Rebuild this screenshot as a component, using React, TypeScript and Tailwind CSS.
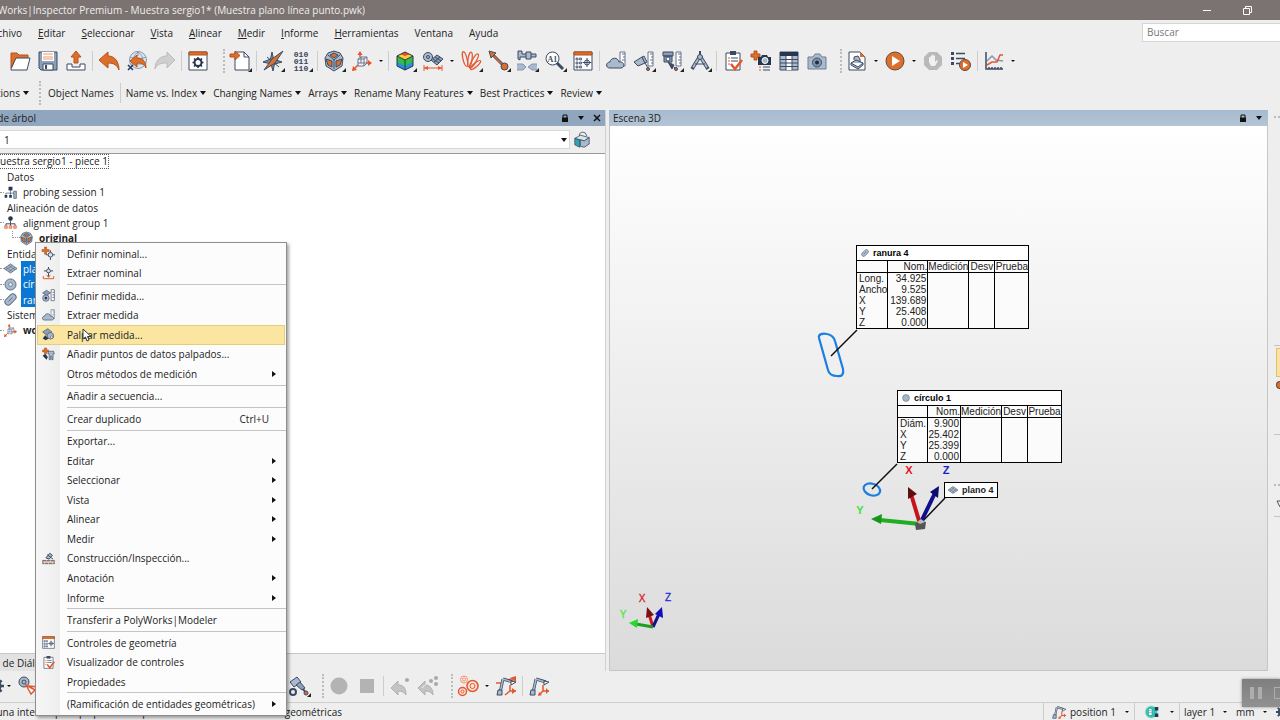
import React, { ReactNode } from "react";

const INK = "#3c4b63";
const STEEL = "#a9bacd";
const ORANGE = "#dd6f2a";
const RED = "#e4572e";

const icons: Record<string, ReactNode> = {
  open: (
    <>
      <path d="M1 17V2h6l2 2h9v4H6z" fill={ORANGE} stroke="#b4531c" />
      <path d="M1 18 6 7h14l-3 12H1z" fill="#fff" stroke={INK} />
    </>
  ),
  save: (
    <>
      <path d="M1 1h18v18H3l-2-2z" fill="#8ba0b8" stroke={INK} />
      <path d="M4 1h12v9H4z" fill="#fff" />
      <path d="M5 3h10M5 6h10M5 8h10" stroke="#e79a72" />
      <path d="M5 13h10v6H5z" fill="#fff" stroke={INK} />
      <path d="M7 14h2v4H7z" fill={INK} />
    </>
  ),
  upload: (
    <>
      <path d="M1 13h5v3h8v-3h5v6H1z" fill="#fff" stroke={INK} />
      <path d="M8 12V6H5l5-6 5 6h-3v6z" fill={ORANGE} stroke="#b4531c" />
    </>
  ),
  undo: <path d="M0 9 9 1v4c7 0 11 6 11 14-2-5-5-7-11-7v5z" fill={ORANGE} stroke="#b4531c" />,
  undoView: (
    <>
      <circle cx="11" cy="9" r="8.500" fill="#dfe6ee" stroke="#8597ae" />
      <path d="M11 1v4M3 6c5 2 11 2 16 0M11 1c-4 3-5 6-5 9M11 1c4 3 5 6 5 9M3 13h16" stroke="#8597ae" />
      <path d="M3 10 10 4v3c6 0 9 4 9 10-2-4-4-5-9-5v4z" fill={ORANGE} stroke="#b4531c" />
      <path d="m1 14 5 5m0-5-5 5" stroke="#203a63" strokeWidth="1.500" />
    </>
  ),
  redo: <path d="M20 9 12 1v4C4 5 0 11 0 18c2-5 6-6 12-6v5z" fill="#cfcfcf" stroke="#bcbcbc" />,
  settings: (
    <>
      <path d="M1 1h18v18H1z" fill="#fff" stroke={INK} />
      <path d="M1 1h18v3H1z" fill={ORANGE} stroke="#b4531c" />
      <circle cx="10" cy="11.500" r="3.500" stroke="#24344d" strokeWidth="2" />
      <path d="M10 6v2m0 7v2m-5.500-5.500h2m7 0h2M6 7.500l1.500 1.500m5 5 1.500 1.500m0-8L12.500 9m-5 5L6 15.500" stroke="#24344d" strokeWidth="1.500" />
    </>
  ),
  importDoc: (
    <>
      <path d="M5 1h9l5 5v13H5z" fill="#fff" stroke={INK} />
      <path d="M14 1v5h5" stroke={INK} />
      <path d="M0 3h5V0l5 4.500L5 9V6H0z" fill={ORANGE} stroke="#b4531c" />
    </>
  ),
  compass: (
    <>
      <path d="m9 1 1.500 7L19 11l-7.500 2L10 20l-2-7-8-2 7.500-3z" fill="#7689a2" stroke={INK} />
      <path d="m4 6 12 10" stroke={INK} />
      <path d="M20 0 12 12 1 19 9 8z" fill={ORANGE} stroke={INK} />
    </>
  ),
  atom: (
    <>
      <path d="M4 2 10 0l6 2 3 5-1 8-8 5-8-5L1 7z" fill={STEEL} stroke={INK} />
      <path d="m6 4 4-2 4 2-4 3z" fill={ORANGE} stroke={INK} />
      <path d="m2 8 6 2v6l-4-2zM18 8l-6 2v6l4-2z" fill={ORANGE} stroke={INK} />
      <path d="M10 9v9M4 4l6 5 6-5" stroke={INK} />
    </>
  ),
  axes: (
    <>
      <path d="m6 8 3-2h6v6l-3 3H6zM6 8h6v7M12 8l3-2M9 6v6H6m3 0h6" fill="#f4f6f9" stroke="#66758c" />
      <path d="M8 6V1m6 11h5M6 14l-5 5" stroke={RED} strokeWidth="1.500" />
      <path d="M8 0 5.500 4h5zM20 12l-4-3v6zM0 20l1-5 4 4z" fill={RED} />
    </>
  ),
  spectrum: (
    <>
      <path d="M10 1 2 5l8 4 8-4z" fill="#ef4b2b" />
      <path d="M2 5v10l8 4V9zM18 5v10l-8 4V9z" fill="#2fbd4b" />
      <path d="M5 3 10 5l5-2 3 2-8 4-8-4z" fill="#f7d22c" />
      <path d="M2 11v4l8 4 8-4v-4l-8 4z" fill="#2d8be0" />
      <path d="M10 1 2 5v10l8 4 8-4V5zM2 5l8 4 8-4M10 9v10" stroke="#26364f" />
    </>
  ),
  features: (
    <>
      <circle cx="5" cy="6" r="4.500" fill={STEEL} stroke={INK} />
      <circle cx="5" cy="6" r="1.500" stroke={INK} />
      <path d="m8 9 6-5 6 4-6 6z" fill="#8ba0b8" stroke={INK} />
      <path d="m10 8 6 4M12 6l6 4M11 11l6-5" stroke={INK} />
      <path d="M1 17h18M1 14v6M19 14v6" stroke={RED} />
      <path d="m1 17 4-2v4zM19 17l-4-2v4z" fill={RED} />
    </>
  ),
  fingers: (
    <g stroke={RED} strokeWidth="1.300">
      <ellipse cx="4" cy="8" rx="2" ry="7.500" transform="rotate(-14 4 8)" />
      <ellipse cx="9" cy="8.500" rx="2" ry="7.500" transform="rotate(8 9 8.500)" />
      <ellipse cx="13" cy="10" rx="2" ry="8" transform="rotate(30 13 10)" />
      <ellipse cx="14.500" cy="14" rx="1.800" ry="6.500" transform="rotate(50 14.500 14)" />
    </g>
  ),
  distance: (
    <>
      <path d="m4 4 11 11" stroke={INK} strokeWidth="3" />
      <path d="m4 4 11 11" stroke={ORANGE} strokeWidth="1.500" />
      <path d="m0 0 7 2-5 5z" fill={ORANGE} stroke={INK} />
      <circle cx="15.500" cy="15.500" r="3.500" fill={ORANGE} stroke={INK} />
    </>
  ),
  caliper: (
    <>
      <path d="M1 0v8l2 1V6h16V3H5V0z" fill={STEEL} stroke={INK} />
      <path d="M9 1h5v7H9z" fill={STEEL} stroke={INK} />
      <path d="M0 13h6l3 3-3 3H0M20 13h-5l-4 3 4 3h5" fill={STEEL} stroke="#8597ae" />
    </>
  ),
  callout: (
    <>
      <circle cx="7.500" cy="7.500" r="6.500" fill="#fff" stroke={INK} />
      <path d="m12 12 6 6" stroke={INK} strokeWidth="3" />
      <text x="2.500" y="10.500" fill={INK} stroke="none" fontSize="8" fontWeight="700" fontFamily="Liberation Serif, serif">
        A1
      </text>
    </>
  ),
  controls: (
    <>
      <path d="M1 1h18v18H1z" fill="#fff" stroke={INK} />
      <path d="M1 1h18v3H1z" fill={ORANGE} stroke="#b4531c" />
      <path d="M3 7h2v2H3zM6.500 7h2v2h-2zM3 11h2v2H3zM6.500 11h2v2h-2zM3 15h2v2H3zM6.500 15h2v2h-2z" fill={STEEL} stroke={INK} strokeWidth=".7" />
      <circle cx="14" cy="11.500" r="2.500" stroke={INK} />
      <path d="M14 7v9M9.500 11.500h9" stroke={INK} />
    </>
  ),
  cloud: (
    <>
      <path d="M14 1h5v14h-5z" fill="#fff" stroke="#66758c" />
      <path d="M16 3h3M17 6h2M16 9h3" stroke="#66758c" />
      <path d="M4 17c-5 0-4-6 0-6 1-5 8-5 9 0 6-1 6 6 2 6z" fill={STEEL} stroke={INK} />
    </>
  ),
  probe: (
    <>
      <path d="M14 1h5v14h-5z" fill="#fff" stroke="#66758c" />
      <path d="M16 3h3M17 6h2M16 9h3M17 12h2" stroke="#66758c" />
      <path d="m0 11 8-5 3 6-7 3z" fill={STEEL} stroke={INK} />
      <path d="m8 6 2-1 3 6-2 1zM11 12l3 5" fill={STEEL} stroke={INK} />
      <circle cx="14" cy="18" r="1.500" fill={ORANGE} stroke={INK} />
    </>
  ),
  scanner: (
    <>
      <path d="M14 1h5v14h-5z" fill="#fff" stroke="#66758c" />
      <path d="M16 3h3M17 6h2M16 9h3M17 12h2" stroke="#66758c" />
      <path d="M1 1h10v4H1zM2 5h8v6H2z" fill="#8ba0b8" stroke={INK} />
      <circle cx="6" cy="8" r="2" fill="#fff" stroke={INK} />
      <path d="m6 11 6 3-2 4zM12 16l2 2" fill={INK} stroke={INK} />
      <circle cx="14" cy="18" r="1.500" fill={ORANGE} stroke={INK} />
    </>
  ),
  divider: (
    <>
      <path d="M10 5 2 18M10 5l8 13" stroke={INK} strokeWidth="3.500" />
      <path d="M10 5 3 16.500M10 5l7 11.500" stroke={STEEL} strokeWidth="1.800" />
      <path d="M5 13h10" stroke={INK} />
      <path d="M9 0h2v4H9z" fill={INK} />
      <circle cx="10" cy="6" r="2.500" fill={STEEL} stroke={INK} />
    </>
  ),
  checklist: (
    <>
      <path d="M3 2h14v17H3z" fill="#fff" stroke={INK} />
      <path d="M7 0h6v4H7z" fill={INK} />
      <path d="M5 7h2M5 10h2M5 13h2" stroke={RED} />
      <path d="M8 7h7M8 10h7" stroke={INK} />
      <path d="m8 13 4 5 7-9" stroke={RED} strokeWidth="2.500" />
    </>
  ),
  addSnapshot: (
    <>
      <path d="M3 0h3v3h3v3H6v3H3V6H0V3h3z" fill={ORANGE} stroke="#b4531c" />
      <path d="M7 6h3l1-2h5l1 2h3v8H7z" fill="#26364f" />
      <circle cx="14" cy="9.500" r="3" fill={STEEL} stroke="#fff" />
      <path d="M8 16h2M8 19h2" stroke={RED} />
      <path d="M12 16h7M12 19h7" stroke={INK} />
    </>
  ),
  table: (
    <>
      <path d="M1 1h18v18H1z" fill={STEEL} stroke={INK} />
      <path d="M1 1h18v4H1z" fill="#26364f" />
      <path d="M7 5h6v14H7z" fill="#fff" />
      <path d="M1 8.500h18M1 12h18M1 15.500h18M7 5v14M13 5v14" stroke={INK} />
    </>
  ),
  camera: (
    <>
      <path d="M1 6h5l2-3h5l2 3h4v12H1z" fill={STEEL} stroke="#6d7f97" />
      <circle cx="10" cy="11.500" r="4.500" fill="#8496ad" stroke={INK} />
      <circle cx="10" cy="11.500" r="2" fill="#1e2b40" />
    </>
  ),
  printDoc: (
    <>
      <path d="M2 1h11l5 5v13H2z" fill="#fff" stroke={INK} />
      <path d="M13 1v5h5z" fill={ORANGE} />
      <path d="m4 12 5-3 7 3-5 4zM4 12v2l7 4 5-4v-2M7 9V6l4-1 2 3v3" fill={STEEL} stroke={INK} />
    </>
  ),
  play: (
    <>
      <circle cx="10" cy="10" r="9" fill={ORANGE} stroke="#5d4a44" />
      <path d="m7 5 8 5-8 5z" fill="#fff" />
    </>
  ),
  halt: (
    <>
      <path d="M6 1h8l5 5v8l-5 5H6l-5-5V6z" fill="#b9b9b9" />
      <path d="M6 11V6.500q.8-1 1.500 0V9 5q.8-1 1.500 0v4-5q.8-1 1.500 0v5-4q.8-1 1.500 0v6l2-2 1 1-3 5H8z" fill="#f1f1f1" />
    </>
  ),
  sequence: (
    <>
      <path d="M0 1h3v3H0zM0 6h3v3H0zM0 11h3v3H0z" fill={INK} />
      <path d="M5 2.500h9M5 7.500h9M5 12.500h4" stroke={INK} strokeWidth="1.500" />
      <circle cx="14" cy="14" r="5.500" fill={ORANGE} stroke="#5d4a44" />
      <path d="m12 11 5 3-5 3z" fill="#fff" />
    </>
  ),
  chart: (
    <>
      <path d="m3 10 5-5 4 4 7 1" stroke="#8597ae" strokeWidth="1.500" />
      <path d="m3 14 5-3h5l3-7h3" stroke={RED} strokeWidth="1.500" />
      <path d="M2 1v17h17M5 16v2m3-2v2m3-2v2m3-2v2m3-2v2" stroke={INK} strokeWidth="1.500" />
    </>
  ),
  session: (
    <>
      <path d="M7 1h6v6H7zM1 14h4v4H1zM8 14h4v4H8z" fill="#26364f" />
      <path d="M10 7v7M3 14v-3h13v2" stroke={INK} />
      <path d="M15 8h4v11h-4z" fill={STEEL} stroke={INK} />
    </>
  ),
  alignGroup: (
    <>
      <circle cx="10" cy="4" r="3.500" fill="#26364f" />
      <path d="M10 8v4M3 15v-3h14v3M10 12v3" stroke={INK} strokeWidth="1.500" />
      <path d="M1 19v-4h4v4zM8 19v-4h4v4zM15 19v-4h4v4z" fill="#f1b79a" stroke={RED} />
    </>
  ),
  plane: (
    <>
      <path d="m0 10 10-7 10 7-10 7z" fill={STEEL} stroke={INK} />
      <path d="m3 8 10 7M7 5l10 7M3 12l10-7M7 15l10-7" stroke="#5b6b82" />
    </>
  ),
  circle: (
    <>
      <circle cx="10" cy="10" r="8.500" fill={STEEL} stroke="#5b6b82" strokeWidth="1.500" />
      <circle cx="10" cy="10" r="3" fill="#dbe3ec" stroke="#5b6b82" />
    </>
  ),
  slot: (
    <>
      <rect x="0" y="5" width="20" height="10" rx="5" transform="rotate(-45 10 10)" fill={STEEL} stroke="#5b6b82" strokeWidth="1.500" />
      <path d="m7 13 6-6" stroke="#5b6b82" strokeWidth="1.500" />
    </>
  ),
  defineNominal: (
    <>
      <path d="M4 0h3v4h4v3H7v4H4V7H0V4h4z" fill={ORANGE} stroke="#b4531c" />
      <circle cx="13" cy="12" r="3.500" fill="#dbe3ec" stroke={INK} strokeWidth="1.500" />
      <path d="M13 5v3m0 8v4M6 12h3m8 0h3" stroke={INK} strokeWidth="1.500" />
    </>
  ),
  extractNominal: (
    <>
      <circle cx="10" cy="6" r="3" fill="#dbe3ec" stroke={INK} strokeWidth="1.500" />
      <path d="M10 0v3M3 6h4m6 0h4M10 9v6" stroke={INK} strokeWidth="1.500" />
      <path d="m7 12 3 4 3-4M2 14v4h16v-4" stroke={RED} strokeWidth="1.500" />
    </>
  ),
  defineMeasured: (
    <>
      <path d="m1 6 6-4 6 4-6 4z" fill="#8ba0b8" stroke={INK} />
      <circle cx="6" cy="14" r="5" fill={STEEL} stroke={INK} />
      <circle cx="6" cy="14" r="2" fill="#26364f" />
      <path d="M14 1h5v17h-5zM16 5h3m-3 4h3m-3 4h3" fill="#fff" stroke={INK} />
    </>
  ),
  probeMeasured: (
    <>
      <path d="m1 6 8-5 6 5-8 5z" fill="#8ba0b8" stroke={INK} />
      <circle cx="13" cy="12" r="5" fill={STEEL} stroke={INK} />
      <circle cx="15" cy="14" r="2" fill="#fff" stroke={INK} />
      <path d="m1 16 4-5 5 5-4 3z" fill="#26364f" />
    </>
  ),
  addPoints: (
    <>
      <path d="M4 0h3v3h3v3H7v3H4V6H1V3h3z" fill={ORANGE} stroke="#b4531c" />
      <path d="m1 12 4-3 4 5-2 4z" fill="#26364f" />
      <path d="M10 5h8l1 4h-2v9h-2v-5h-2v5h-2V9H9z" fill={STEEL} stroke={INK} />
    </>
  ),
  construction: (
    <>
      <path d="m6 9 6-7 4 3-5 6zM8 4l9 7" fill={STEEL} stroke={INK} strokeWidth="1.500" />
      <path d="M1 13h18v5H1z" fill="#c98d72" stroke={INK} />
      <path d="M1 15.500h18M7 13v2M13 13v2M4 16v2M10 16v2M16 16v2" stroke="#fff" />
    </>
  ),
  pieces: (
    <>
      <path d="M7 5V2l3-2 4 1 2 4" stroke={INK} />
      <path d="m1 8 7-4 11 3-6 4z" fill="#dbe3ec" stroke={INK} />
      <path d="M1 8v8l6 3v-9z" fill="#2aa5b8" stroke={INK} />
      <path d="m8 10 5 1 6-4v8l-6 4-5-1z" fill={STEEL} stroke={INK} />
    </>
  ),
  probeAxis: (
    <>
      <circle cx="6" cy="6" r="5" fill={STEEL} stroke={INK} />
      <circle cx="6" cy="6" r="2" stroke={INK} />
      <path d="m8 9 5 9 4-4zM11 10l9 1" fill="#fff" stroke={RED} strokeWidth="1.500" />
    </>
  ),
  probeSettings: (
    <>
      <path d="m1 6 7-5 4 5-7 5z" fill={STEEL} stroke={INK} />
      <path d="m7 9 4-3 5 6-3 2z" fill="#8ba0b8" stroke={INK} />
      <path d="m14 13 3 4" stroke={INK} strokeWidth="2" />
      <circle cx="17" cy="17" r="2" fill={ORANGE} stroke={INK} />
      <circle cx="4" cy="16" r="3" stroke={INK} strokeWidth="2" />
    </>
  ),
  record: <circle cx="10" cy="10" r="8.500" fill="#b3b3b3" />,
  stop: <path d="M3 3h14v14H3z" fill="#b3b3b3" />,
  undoPoint: (
    <>
      <path d="m1 12 7-7v4c7 0 8 5 8 10-2-3-4-4-8-4v4z" fill="#c4c4c4" stroke="#b0b0b0" />
      <circle cx="17" cy="4" r="2" fill="#a9a9a9" />
    </>
  ),
  undoPoints: (
    <>
      <path d="m0 12 7-7v4c6 0 8 5 8 10-2-3-4-4-8-4v4z" fill="#c4c4c4" stroke="#b0b0b0" />
      <path d="m4 12 6-6" stroke="#eee" />
      <circle cx="13" cy="5" r="2" fill="#a9a9a9" />
      <circle cx="18" cy="2" r="2" fill="#a9a9a9" />
      <circle cx="18" cy="8" r="2" fill="#a9a9a9" />
    </>
  ),
  targets: (
    <g stroke={RED} fill="#fbe4da">
      <circle cx="6" cy="3.500" r="3.500" stroke="#f0977a" />
      <circle cx="6" cy="3.500" r="1.500" stroke="#f0977a" />
      <circle cx="14.500" cy="10" r="5.500" strokeWidth="1.500" />
      <circle cx="14.500" cy="10" r="2.500" />
      <circle cx="4.500" cy="15.500" r="4" strokeWidth="1.500" />
      <circle cx="4.500" cy="15.500" r="1.500" />
    </g>
  ),
  armMove: (
    <>
      <path d="M0 7h6M12 4l6-2m-4 7v6m0 0-5 4m5-4h6" stroke={RED} strokeWidth="1.500" />
      <path d="M20 0v6l-6-4zM20 15l-4-3v6z" fill={RED} />
      <path d="M4 17 7 3m0 0 10 3" stroke={INK} strokeWidth="3" />
      <path d="M4 17 7 3m0 0 9 3" stroke={STEEL} strokeWidth="1.500" />
      <path d="M1 19 2 14h4v5z" fill={STEEL} stroke={INK} />
      <path d="m15 5 5 1-5 3z" fill="#fff" stroke={INK} />
    </>
  ),
  arm: (
    <>
      <path d="M14 9v6m0 0-4 4m4-4h6" stroke={RED} strokeWidth="1.500" />
      <path d="m20 15-3-3v6zM9 20l1-4 3 3z" fill={RED} />
      <path d="M4 17 7 3m0 0 10 3" stroke={INK} strokeWidth="3" />
      <path d="M4 17 7 3m0 0 9 3" stroke={STEEL} strokeWidth="1.500" />
      <path d="M1 19 2 14h4v5z" fill={STEEL} stroke={INK} />
      <path d="m15 5 5 1-5 3z" fill="#fff" stroke={INK} />
    </>
  ),
  device: (
    <>
      <circle cx="9" cy="10" r="8.500" fill="#35c4b4" stroke="#8fd9d0" />
      <path d="M5 5h5v10H5zM6 8h3M6 11h3" fill="#fff" stroke="#2a9d90" />
      <path d="M14 3h5v5h-5zM14 12h5v5h-5z" fill="#26364f" />
    </>
  ),
  gear: (
    <>
      <circle cx="10" cy="10" r="5" stroke={INK} strokeWidth="4" />
      <path d="M10 0v5m0 10v5M0 10h5m10 0h5M3 3l3 3m8 8 3 3m0-14-3 3m-8 8-3 3" stroke={INK} strokeWidth="3" />
    </>
  ),
};

function Icon({ name, className = "size-5" }: { name: string; className?: string }) {
  return (
    <svg viewBox="0 0 20 20" fill="none" className={`${className} shrink-0 overflow-visible`} aria-hidden="true">
      {icons[name]}
    </svg>
  );
}

function Caret({ className = "" }: { className?: string }) {
  return (
    <svg viewBox="0 0 8 8" className={`size-2 shrink-0 ${className}`} aria-hidden="true">
      <path d="M1 2h6L4 6z" fill="#111" />
    </svg>
  );
}

function Lock() {
  return (
    <svg viewBox="0 0 8 8" className="size-2 shrink-0" aria-hidden="true">
      <path d="M2 4V1h4v3" fill="none" stroke="#111" />
      <path d="M1 3.500h6V8H1z" fill="#111" />
    </svg>
  );
}

function Corner() {
  return (
    <svg viewBox="0 0 4 4" className="absolute right-0.5 -bottom-px size-1" aria-hidden="true">
      <path d="M4 0v4H0z" fill="#222" />
    </svg>
  );
}

function Tool({ name, label, corner = false }: { name: string; label: string; corner?: boolean }) {
  return (
    <button type="button" aria-label={label} className="relative flex w-7 shrink-0 items-center justify-center">
      <Icon name={name} />
      {corner && <Corner />}
    </button>
  );
}

function ToolCaret({ label }: { label: string }) {
  return (
    <button type="button" aria-label={label} className="flex w-2.5 shrink-0 items-center justify-center">
      <svg viewBox="0 0 4 4" className="size-1" aria-hidden="true">
        <path d="M0 1h4L2 3z" fill="#111" />
      </svg>
    </button>
  );
}

function Sep() {
  return <span className="mx-0.5 h-5 w-px shrink-0 bg-[#cdcdcd]" />;
}

function Grip() {
  return (
    <span className="flex w-3 shrink-0 justify-end pr-px">
      <span className="h-6 border-l-2 border-dotted border-[#bcbcbc]" />
    </span>
  );
}

const menus = ["Editar", "Seleccionar", "Vista", "Alinear", "Medir", "Informe", "Herramientas"];

function MenuBar() {
  return (
    <div className="flex h-[26px] shrink-0 items-center">
      <nav className="flex flex-1 items-center gap-4 pb-px">
        <button type="button" className="flex w-[22px] justify-end overflow-hidden">
          Archivo
        </button>
        {menus.map((menu) => (
          <button type="button" key={menu}>
            <span className="underline">{menu[0]}</span>
            {menu.slice(1)}
          </button>
        ))}
        <button type="button">Ventana</button>
        <button type="button">Ayuda</button>
      </nav>
      <input
        type="search"
        aria-label="Buscar"
        placeholder="Buscar"
        className="mb-0.5 h-[19px] w-[138px] border border-r-0 border-[#d5d5d5] bg-white px-1 placeholder:text-[#777]"
      />
    </div>
  );
}

function MainToolbar() {
  return (
    <div className="flex h-[30px] shrink-0 items-center">
      <div className="flex items-center pr-0.5 pl-1.5">
        <Tool name="open" label="Abrir" />
        <Tool name="save" label="Guardar" />
        <Tool name="upload" label="Exportar" />
        <Sep />
        <Tool name="undo" label="Deshacer" />
        <Tool name="undoView" label="Deshacer vista" />
        <Tool name="redo" label="Rehacer" />
        <Sep />
        <Tool name="settings" label="Opciones" />
      </div>
      <div className="flex items-center">
        <Grip />
        <Tool name="importDoc" label="Importar" corner />
        <Sep />
        <Tool name="compass" label="Navegar" corner />
        <button type="button" aria-label="Datos" className="relative flex h-5 w-7 items-center justify-center">
          <span className="font-['Liberation_Mono',monospace] text-[8px] leading-[7px] font-bold text-[#34435a]">
            010
            <br />
            011
            <br />
            110
          </span>
          <Corner />
        </button>
        <Sep />
        <Tool name="atom" label="Alinear" corner />
        <Tool name="axes" label="Sistema de coordenadas" />
        <ToolCaret label="Más sistemas" />
        <Sep />
        <Tool name="spectrum" label="Mapa de color" corner />
        <Tool name="features" label="Entidades" />
        <ToolCaret label="Más entidades" />
        <Tool name="fingers" label="Comparar" corner />
        <Tool name="distance" label="Distancia" corner />
        <Tool name="caliper" label="Calibre" corner />
        <Tool name="callout" label="Anotación" corner />
        <Tool name="controls" label="Controles de geometría" />
        <Sep />
        <Tool name="cloud" label="Extraer medida" />
        <Tool name="probe" label="Palpar" corner />
        <Tool name="scanner" label="Escanear" corner />
        <Tool name="divider" label="Construir" corner />
        <Sep />
        <Tool name="checklist" label="Visualizador de controles" />
        <Tool name="addSnapshot" label="Añadir instantánea" />
        <Tool name="table" label="Tabla" />
        <Tool name="camera" label="Cámara" />
      </div>
      <div className="flex items-center">
        <Grip />
        <Tool name="printDoc" label="Informe" />
        <ToolCaret label="Más informes" />
        <Tool name="play" label="Reproducir" />
        <ToolCaret label="Más reproducción" />
        <Tool name="halt" label="Detener" />
        <Tool name="sequence" label="Secuencia" />
        <Sep />
        <Tool name="chart" label="Gráfico" />
        <ToolCaret label="Más gráficos" />
      </div>
    </div>
  );
}

const macros = ["Name vs. Index", "Changing Names", "Arrays", "Rename Many Features", "Best Practices", "Review"];

function MacroBar() {
  return (
    <div className="flex h-[34px] shrink-0 items-center whitespace-nowrap">
      <button type="button" className="flex items-center gap-0.5">
        <span className="flex w-5 justify-end overflow-hidden">Functions</span>
        <Caret />
      </button>
      <Grip />
      <button type="button" className="pr-1 pl-1.5">
        Object Names
      </button>
      <Sep />
      <div className="flex items-center gap-1.5 pl-[3px]">
        {macros.map((macro) => (
          <button type="button" key={macro} className="flex items-center gap-0.5">
            {macro}
            <Caret />
          </button>
        ))}
      </div>
    </div>
  );
}

interface TreeRowProps {
  label: string;
  icon?: string;
  level: number;
  selected?: boolean;
  bold?: boolean;
}

const treeRows: TreeRowProps[] = [
  { label: "Datos", level: 0 },
  { label: "probing session 1", level: 1, icon: "session" },
  { label: "Alineación de datos", level: 0 },
  { label: "alignment group 1", level: 1, icon: "alignGroup" },
  { label: "original", level: 2, icon: "atom", bold: true },
  { label: "Entidades", level: 0 },
  { label: "plano 4", level: 1, icon: "plane", selected: true },
  { label: "círculo 1", level: 1, icon: "circle", selected: true },
  { label: "ranura 4", level: 1, icon: "slot", selected: true },
  { label: "Sistemas", level: 0 },
  { label: "world", level: 1, icon: "axes", bold: true },
];

function TreeRow({ label, icon, level, selected, bold }: TreeRowProps) {
  return (
    <li className={`flex flex-1 items-stretch ${level === 2 ? "pl-3" : ""}`}>
      {level === 1 && <span className="w-1 self-center border-t border-dotted border-[#999]" />}
      {level === 2 && <span className="mb-2 w-2 border-b border-l border-dotted border-[#999]" />}
      {icon && <Icon name={icon} className="size-[13px] self-center" />}
      <span
        className={`flex items-center ${level === 0 ? "pl-[7px]" : "ml-1 px-0.5"} ${
          selected ? "bg-[#0a78d2] text-white" : ""
        } ${bold ? "font-bold" : ""}`}
      >
        {label}
      </span>
    </li>
  );
}

function TreePanel() {
  return (
    <section className="flex shrink-0 basis-[606px] flex-col border-r border-[#d0d0d0]">
      <header className="flex h-4 items-center justify-between bg-[#90a6bf] pr-1">
        <h2 className="flex w-9 justify-end overflow-hidden whitespace-nowrap">Vista de árbol</h2>
        <div className="flex items-center gap-2">
          <Lock />
          <Caret />
          <button type="button" aria-label="Cerrar">
            <svg viewBox="0 0 8 8" className="size-2" aria-hidden="true">
              <path d="m1 1 6 6m0-6L1 7" stroke="#111" strokeWidth="1.500" />
            </svg>
          </button>
        </div>
      </header>
      <div className="flex h-7 shrink-0 items-center gap-1 border-b border-[#9a9a9a] pr-[15px]">
        <label className="relative flex flex-1 items-center">
          <select
            aria-label="Pieza"
            className="h-[19px] w-full appearance-none border border-l-0 border-[#d8d8d8] bg-white pl-1"
            defaultValue="1"
          >
            <option value="1">1</option>
          </select>
          <Caret className="pointer-events-none absolute right-0.5" />
        </label>
        <Icon name="pieces" className="size-4" />
      </div>
      <div className="flex-1 bg-white">
        <ul className="flex h-[184px] flex-col whitespace-nowrap">
          <li className="flex flex-1 items-center">
            <span className="flex w-[109px] justify-end overflow-hidden border border-l-0 border-dotted border-[#555] leading-[13px]">
              Muestra sergio1 - piece 1
            </span>
          </li>
          {treeRows.map((row) => (
            <TreeRow key={row.label} {...row} />
          ))}
        </ul>
      </div>
      <div className="h-[18px] shrink-0 border-t border-[#c8c8c8]">
        <button type="button" className="flex h-full w-[60px] items-center bg-[#e2e2e2] whitespace-nowrap">
          <span>&nbsp;de Diálogo</span>
        </button>
      </div>
    </section>
  );
}

interface FeatureTableProps {
  title: string;
  icon: string;
  rows: [string, string][];
  cols: string;
}

function FeatureTable({ title, icon, rows, cols }: FeatureTableProps) {
  return (
    <table className="table-fixed border-collapse border border-black bg-[#fbfbfb] text-[10px] leading-[11px] text-[#222] outline-1 -outline-offset-1 outline-black">
      <caption className="border border-b-0 border-black bg-white text-black">
        <span className="flex h-3.5 items-center gap-1 pl-1 text-[9px] font-bold">
          <Icon name={icon} className="size-2" />
          {title}
        </span>
      </caption>
      <thead>
        <tr className="border-b border-black">
          <th className="w-[30px] border-r border-black p-0" />
          <th className={`${cols} border-r border-black p-0 text-right font-normal`}>Nom.</th>
          <th className="w-[41px] border-r border-black p-0 text-center font-normal">Medición</th>
          <th className="w-[26px] border-r border-black p-0 text-center font-normal">Desv</th>
          <th className="w-[34px] p-0 text-center font-normal">Prueba</th>
        </tr>
      </thead>
      <tbody>
        {rows.map(([name, value]) => (
          <tr key={name}>
            <th className="border-r border-black p-0 pl-0.5 text-left font-normal">{name}</th>
            <td className="border-r border-black p-0 pr-px text-right">{value}</td>
            <td className="border-r border-black p-0" />
            <td className="border-r border-black p-0" />
            <td className="p-0" />
          </tr>
        ))}
      </tbody>
    </table>
  );
}

function ScenePanel() {
  return (
    <section className="ml-[3px] flex min-w-0 flex-1 flex-col">
      <header className="flex h-4 items-center justify-between bg-linear-to-b from-[#a7bbcf] to-[#b3c4d5] pr-[5px] pl-1">
        <h2>Escena 3D</h2>
        <div className="flex items-center gap-2">
          <Lock />
          <Caret />
        </div>
      </header>
      <div className="relative flex-1 overflow-hidden border border-t-0 border-[#c6c6c6] bg-linear-to-b from-white to-[#dbdbdb] font-['Liberation_Sans',Arial,sans-serif]">
        <svg className="absolute inset-0 h-full w-full" aria-label="Escena">
          <path
            d="M209 212c-1-4 4-5 8-4 5 1 7 3 8 7l8 28c1 5-1 8-6 7-5 0-8-2-9-6z"
            fill="none"
            stroke="#1b7fe0"
            strokeWidth="2.200"
          />
          <ellipse cx="262" cy="363.500" rx="8.500" ry="5.800" transform="rotate(18 262 363)" fill="none" stroke="#1b7fe0" strokeWidth="2.200" />
          <path d="m247 204-26 26M287 338l-25 25M335 372l-25 26" stroke="#111" strokeWidth="1.500" />
          <path d="m310 398-9-30" stroke="#c4141c" strokeWidth="4" />
          <path d="m298 361 9 7-9 5z" fill="#5f0d10" />
          <path d="m310 398 15-31" stroke="#10108c" strokeWidth="4" />
          <path d="m329 360-9 6 8 6z" fill="#0a0a70" />
          <path d="m310 398-40-4" stroke="#1fae22" strokeWidth="4" />
          <path d="m261 393 11-5-1 10z" fill="#17961b" />
          <path d="m305 398 5-4 6 2-1 7-9 1z" fill="#555" />
          <path d="m307 396 4-3 4 3-5 2z" fill="#bbb" />
          <g fontSize="11" fontWeight="700" textAnchor="middle">
            <text x="299" y="348" fill="#e3121c">X</text>
            <text x="336" y="348" fill="#1c1ccc">Z</text>
            <text x="250" y="388" fill="#3be23b">Y</text>
          </g>
          <path d="m43 501-4-13" stroke="#d0161c" strokeWidth="3" />
          <path d="m37 481 7 8-8 3z" fill="#7c1013" />
          <path d="m43 501 6-13" stroke="#10108c" strokeWidth="3" />
          <path d="m52 481-7 7 8 4z" fill="#0c0cc0" />
          <path d="m43 501-17-3" stroke="#1c9e20" strokeWidth="3" />
          <path d="m19 497 9-4-1 9z" fill="#25d82a" />
          <g fontSize="10" textAnchor="middle" strokeWidth=".3">
            <text x="32" y="476" fill="#d8202a" stroke="#d8202a">X</text>
            <text x="58" y="475" fill="#2a2ad8" stroke="#2a2ad8">Z</text>
            <text x="13" y="492" fill="#4be64b" stroke="#4be64b">Y</text>
          </g>
        </svg>
        <div className="absolute top-[119px] left-[246px]">
          <FeatureTable
            title="ranura 4"
            icon="slot"
            cols="w-[40px]"
            rows={[
              ["Long.", "34.925"],
              ["Ancho", "9.525"],
              ["X", "139.689"],
              ["Y", "25.408"],
              ["Z", "0.000"],
            ]}
          />
        </div>
        <div className="absolute top-[264px] left-[287px]">
          <FeatureTable
            title="círculo 1"
            icon="circle"
            cols="w-[33px]"
            rows={[
              ["Diám.", "9.900"],
              ["X", "25.402"],
              ["Y", "25.399"],
              ["Z", "0.000"],
            ]}
          />
        </div>
        <div className="absolute top-[356px] left-[334px] flex h-4 items-center gap-1 border border-black bg-white px-[3px] text-[9px] font-bold">
          <Icon name="plane" className="size-2.5" />
          plano 4
        </div>
      </div>
    </section>
  );
}

function SideStrip() {
  return (
    <aside className="flex w-3 shrink-0 flex-col items-end overflow-hidden pt-1.5">
      <span className="w-1.5 border-t-2 border-dotted border-[#bbb]" />
      <span className="mt-[227px] w-1.5 border-t border-[#c4c4c4]" />
      <span className="mt-0.5 h-[29px] w-1 border border-r-0 border-[#e6bd6a] bg-[#fbe3a6]" />
      <span className="mt-1 h-2 w-1 rounded-l-sm border border-r-0 border-[#5d4a44] bg-[#dd6f2a]" />
      <span className="mt-[45px] w-1.5 border-t border-[#c4c4c4]" />
      <span className="mt-[49px] w-1.5 border-t-2 border-dotted border-[#bbb]" />
      <svg viewBox="0 0 4 8" className="mt-3.5 h-2 w-1" aria-hidden="true">
        <path d="M4 1H1l3 6" fill="none" stroke="#555" />
      </svg>
      <span className="mt-2 w-1.5 border-t border-[#c4c4c4]" />
    </aside>
  );
}

interface MenuEntry {
  label: string;
  icon?: string;
  sub?: boolean;
  keys?: string;
  active?: boolean;
}

const contextMenu: (MenuEntry | null)[] = [
  { label: "Definir nominal...", icon: "defineNominal" },
  { label: "Extraer nominal", icon: "extractNominal" },
  null,
  { label: "Definir medida...", icon: "defineMeasured" },
  { label: "Extraer medida", icon: "cloud" },
  { label: "Palpar medida...", icon: "probeMeasured", active: true },
  { label: "Añadir puntos de datos palpados...", icon: "addPoints" },
  { label: "Otros métodos de medición", sub: true },
  null,
  { label: "Añadir a secuencia..." },
  null,
  { label: "Crear duplicado", keys: "Ctrl+U" },
  null,
  { label: "Exportar..." },
  { label: "Editar", sub: true },
  { label: "Seleccionar", sub: true },
  { label: "Vista", sub: true },
  { label: "Alinear", sub: true },
  { label: "Medir", sub: true },
  { label: "Construcción/Inspección...", icon: "construction" },
  { label: "Anotación", sub: true },
  { label: "Informe", sub: true },
  null,
  { label: "Transferir a PolyWorks|Modeler" },
  null,
  { label: "Controles de geometría", icon: "controls" },
  { label: "Visualizador de controles", icon: "checklist" },
  { label: "Propiedades" },
  null,
  { label: "(Ramificación de entidades geométricas)", sub: true },
];

function ContextMenu() {
  return (
    <div
      role="menu"
      className="absolute top-[242px] left-[35px] z-10 flex h-[474px] w-[252px] flex-col border border-[#8e8e8e] bg-[#fcfcfc] bg-linear-to-r from-[#f6f6f6] from-0% to-[#eeeeee] to-100% bg-[length:24px_100%] bg-no-repeat py-px shadow-[2px_2px_3px_rgba(0,0,0,0.35)]"
    >
      {contextMenu.map((entry, i) =>
        entry ? (
          <button
            type="button"
            role="menuitem"
            key={entry.label}
            className={`relative mx-px flex flex-1 items-center text-left whitespace-nowrap ${
              entry.active ? "bg-[#fae6a0] outline-1 -outline-offset-1 outline-[#e6cd7c]" : ""
            }`}
          >
            <span className="flex w-[30px] shrink-0 pl-[5px]">
              {entry.icon && <Icon name={entry.icon} className="size-[13px]" />}
            </span>
            <span className="flex-1">{entry.label}</span>
            {entry.keys && <span className="pr-4">{entry.keys}</span>}
            {entry.sub && <Caret className="mr-[7px] -rotate-90" />}
          </button>
        ) : (
          <span key={i} className="my-px ml-[31px] h-px shrink-0 bg-[#c3c3c3]" />
        )
      )}
    </div>
  );
}

function BottomToolbar() {
  return (
    <div className="flex h-8 shrink-0 items-center border-b border-[#cfcfcf] pb-px">
      <div className="flex flex-none basis-[285px] items-center">
        <Icon name="gear" className="-ml-3 size-4" />
        <ToolCaret label="Más dispositivos" />
        <Tool name="probeAxis" label="Palpador" />
      </div>
      <Tool name="probeSettings" label="Opciones de palpador" corner />
      <Grip />
      <Tool name="record" label="Grabar" />
      <Tool name="stop" label="Parar" />
      <Sep />
      <Tool name="undoPoint" label="Borrar punto" />
      <Tool name="undoPoints" label="Borrar puntos" />
      <Grip />
      <Tool name="targets" label="Objetivos" />
      <ToolCaret label="Más objetivos" />
      <Tool name="armMove" label="Mover dispositivo" />
      <Sep />
      <Tool name="arm" label="Posición" />
    </div>
  );
}

function StatusBar() {
  return (
    <footer className="flex h-[17px] shrink-0 items-center justify-between whitespace-nowrap">
      <p className="flex w-[342px] justify-end overflow-hidden">
        Abre una interfaz para palpar la componente medida de entidades geométricas
      </p>
      <div className="flex items-center">
        <Sep />
        <button type="button" className="flex w-[86px] items-center gap-1 pl-1.5">
          <Icon name="arm" className="size-3.5" />
          <span className="flex-1 text-left">position 1</span>
          <ToolCaret label="Más posiciones" />
        </button>
        <Sep />
        <button type="button" aria-label="Dispositivo" className="flex w-10 items-center justify-between pl-2">
          <Icon name="device" className="size-3.5" />
          <ToolCaret label="Más dispositivos" />
        </button>
        <Sep />
        <button type="button" className="flex w-12 items-center justify-between pl-0.5">
          layer 1
          <ToolCaret label="Más capas" />
        </button>
        <button type="button" className="flex w-10 items-center justify-between pl-1.5">
          mm
          <ToolCaret label="Más unidades" />
        </button>
        <span className="w-2.5 overflow-hidden pl-1.5">
          <Icon name="gear" className="size-3" />
        </span>
      </div>
    </footer>
  );
}

function App() {
  return (
    <div className="relative flex h-screen flex-col overflow-hidden bg-[#eeeeee] font-['Open_Sans','Noto_Sans',sans-serif] text-[10px] leading-[14px] text-[#222]">
      <div className="flex h-5 shrink-0 items-center justify-between bg-[#7a7371] text-[#f0eeee]">
        <h1 className="flex w-[365px] justify-end overflow-hidden whitespace-nowrap">
          PolyWorks|Inspector Premium - Muestra sergio1* (Muestra plano línea punto.pwk)
        </h1>
        <div className="flex items-center gap-8 pr-7">
          <button type="button" aria-label="Minimizar" className="flex h-2 w-2 items-center">
            <span className="h-px w-2 bg-white" />
          </button>
          <button type="button" aria-label="Restaurar">
            <svg viewBox="0 0 9 9" className="size-[9px]" fill="none" stroke="#fff" aria-hidden="true">
              <path d="M.5 2.500h6v6h-6zM2.500 2V.5h6v6H7" />
            </svg>
          </button>
        </div>
      </div>
      <MenuBar />
      <MainToolbar />
      <MacroBar />
      <main className="flex min-h-0 flex-1">
        <TreePanel />
        <ScenePanel />
        <SideStrip />
      </main>
      <BottomToolbar />
      <StatusBar />
      <ContextMenu />
      {/* mouse pointer */}
      <svg viewBox="0 0 9 14" className="absolute top-[328px] left-[82px] z-20 h-3.5 w-[9px]" aria-hidden="true">
        <path d="M1 1v10l2.500-2 1.500 4 2-1-1.500-3.500H9z" fill="#fff" stroke="#333" />
      </svg>
      {/* recorder controls */}
      <div className="absolute right-0 bottom-[13px] z-20 flex h-7 w-[38px] items-center gap-3 overflow-hidden bg-linear-to-b from-[#7f7f7f] to-[#919191] pl-2 shadow-[0_0_3px_rgba(0,0,0,0.4)]">
        <span className="h-3 w-3 shrink-0 border-x-4 border-[#adadad]" />
        <span className="h-3 w-3 shrink-0 border border-[#adadad]" />
      </div>
    </div>
  );
}

export default App;
